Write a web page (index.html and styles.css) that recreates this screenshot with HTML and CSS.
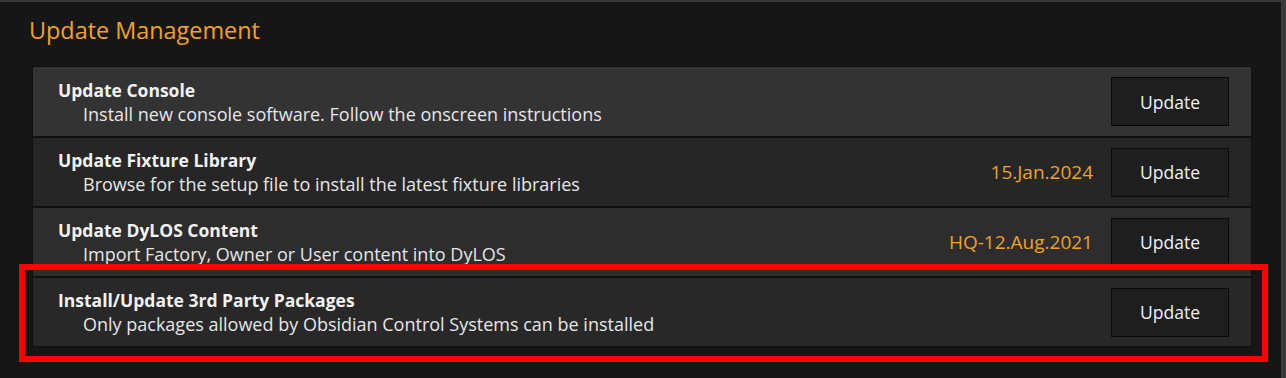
FILE: index.html
```html
<!DOCTYPE html>
<html lang="en">
<head>
  <meta charset="UTF-8">
  <title>Update Management</title>
  <link rel="stylesheet" href="styles.css">
</head>
<body>
  <div class="panel">
    <h2 class="panel-title">Update Management</h2>
    <div class="update-list">
      <div class="update-row">
        <div class="row-text">
          <div class="row-name">Update Console</div>
          <div class="row-desc">Install new console software. Follow the onscreen instructions</div>
        </div>
        <button class="update-btn">Update</button>
      </div>
      <div class="update-row">
        <div class="row-text">
          <div class="row-name">Update Fixture Library</div>
          <div class="row-desc">Browse for the setup file to install the latest fixture libraries</div>
        </div>
        <span class="row-version">15.Jan.2024</span>
        <button class="update-btn">Update</button>
      </div>
      <div class="update-row">
        <div class="row-text">
          <div class="row-name">Update DyLOS Content</div>
          <div class="row-desc">Import Factory, Owner or User content into DyLOS</div>
        </div>
        <span class="row-version">HQ-12.Aug.2021</span>
        <button class="update-btn">Update</button>
      </div>
      <div class="update-row highlighted">
        <div class="row-text">
          <div class="row-name">Install/Update 3rd Party Packages</div>
          <div class="row-desc">Only packages allowed by Obsidian Control Systems can be installed</div>
        </div>
        <button class="update-btn">Update</button>
      </div>
    </div>
  </div>
</body>
</html>
```

FILE: styles.css
```css
:root {
  --accent: #f0a128;
  --panel-bg: #161616;
  --frame: #3a3a3a;
  --font-family: 'Open Sans', 'Noto Sans', sans-serif;
}
* {
  box-sizing: border-box;
  margin: 0;
  padding: 0;
}
body {
  font-family: var(--font-family);
  background: var(--frame);
  height: 378px;
  overflow: hidden;
}
.panel {
  background: var(--panel-bg);
  margin: 2px 5px 0 0;
  height: 376px;
  padding: 12px 30px 0 32px;
}
.panel-title {
  font-weight: 400;
  font-size: 23.4px;
  color: var(--accent);
  margin-left: -3px;
  line-height: 32px;
  margin-bottom: 20px;
}
.update-list {
  display: flex;
  flex-direction: column;
  gap: 2px;
  background: #101010;
  border: 1px solid #101010;
  width: 1220px;
}
.update-row {
  position: relative;
  display: flex;
  align-items: center;
  height: 68px;
  padding: 0 22px 0 25px;
}
.update-row:nth-child(1) {
  background: #333333;
  height: 69px;
}
.update-row:nth-child(2) {
  background: #262626;
}
.update-row:nth-child(3) {
  background: #2d2d2d;
}
.update-row:nth-child(4) {
  background: #282828;
}
.row-text {
  flex: 1;
  color: #ffffff;
  padding-top: 2px;
}
.row-name {
  font-weight: 700;
  font-size: 17.5px;
  line-height: 23px;
  color: #f2f2f2;
}
.row-desc {
  font-size: 18px;
  line-height: 25px;
  padding-left: 25px;
  color: #e6e6e6;
}
.row-version {
  color: var(--accent);
  font-size: 19px;
  margin-right: 18px;
}
.update-btn {
  width: 118px;
  height: 49px;
  background: #1e1e1e;
  border: 1px solid #0a0a0a;
  color: #f2f2f2;
  font-family: var(--font-family);
  font-size: 17.5px;
}
.highlighted::after {
  content: "";
  position: absolute;
  top: -14px;
  left: -14px;
  right: -17px;
  bottom: -16px;
  border: 6px solid #ff0000;
  pointer-events: none;
}
```
